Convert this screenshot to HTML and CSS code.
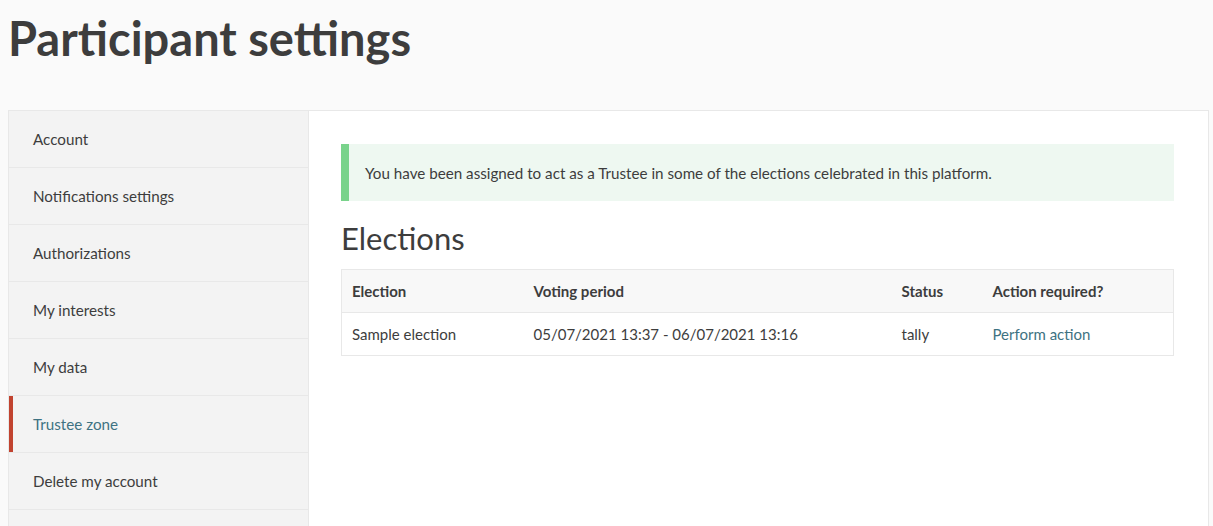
FILE: index.html
```html
<!DOCTYPE html>
<html lang="en">
<head>
<meta charset="utf-8">
<title>Participant settings</title>
<link rel="stylesheet" href="styles.css">
</head>
<body>
<header class="page-head">
  <h1 class="page-title">Participant settings</h1>
</header>
<div class="card">
  <nav class="side">
    <a class="side-item" href="#">Account</a>
    <a class="side-item" href="#">Notifications settings</a>
    <a class="side-item" href="#">Authorizations</a>
    <a class="side-item" href="#">My interests</a>
    <a class="side-item" href="#">My data</a>
    <a class="side-item is-active" href="#">Trustee zone</a>
    <a class="side-item" href="#">Delete my account</a>
  </nav>
  <main class="main">
    <div class="callout">You have been assigned to act as a Trustee in some of the elections celebrated in this platform.</div>
    <h3 class="section-title">Elections</h3>
    <table class="elections">
      <thead>
        <tr>
          <th class="c-election">Election</th>
          <th class="c-period">Voting period</th>
          <th class="c-status">Status</th>
          <th class="c-action">Action required?</th>
        </tr>
      </thead>
      <tbody>
        <tr>
          <td>Sample election</td>
          <td>05/07/2021 13:37 - 06/07/2021 13:16</td>
          <td>tally</td>
          <td><a class="link" href="#">Perform action</a></td>
        </tr>
      </tbody>
    </table>
  </main>
</div>
</body>
</html>
```
FILE: styles.css
```css
* { box-sizing: border-box; }
html, body { margin: 0; padding: 0; }
body {
  background: #fafafa;
  font-family: Lato, "Open Sans", sans-serif;
  color: #3d3d3d;
  height: 526px;
  overflow: hidden;
}
.page-head {
  padding: 8px 8px 0 8px;
  height: 110px;
}
.page-title {
  margin: 0;
  font-size: 47px;
  font-weight: 700;
  line-height: 60px;
  color: #3d3d3d;
}
.card {
  margin: 0 4px 0 8px;
  background: #fff;
  border: 1px solid #e8e8e8;
  border-bottom: 0;
  display: flex;
  height: 416px;
}
.side {
  width: 300px;
  flex: none;
  background: #f3f3f3;
  border-right: 1px solid #e8e8e8;
  display: flex;
  flex-direction: column;
}
.side-item {
  display: flex;
  align-items: center;
  height: 57px;
  flex: none;
  padding-left: 24px;
  border-bottom: 1px solid #e8e8e8;
  color: #3d3d3d;
  text-decoration: none;
  font-size: 15.2px;
}
.side-item.is-active {
  color: #3e7282;
  box-shadow: inset 4px 0 0 #c1432f;
}
.main {
  flex: 1;
  padding: 33px 34px 0 32px;
}
.callout {
  background: #eef8f1;
  border-left: 8px solid #79d38b;
  height: 57px;
  padding: 0 16px;
  display: flex;
  align-items: center;
  font-size: 15.2px;
}
.section-title {
  margin: 14px 0 8px 0;
  font-size: 31px;
  font-weight: 400;
  line-height: 46px;
}
.elections {
  width: 100%;
  border-collapse: collapse;
  border: 1px solid #e8e8e8;
  font-size: 15px;
  table-layout: fixed;
}
.elections th, .elections td {
  text-align: left;
  padding: 0 10px;
  height: 43px;
  vertical-align: middle;
}
.elections thead tr { background: #f8f8f8; border-bottom: 1px solid #e8e8e8; }
.elections th { font-weight: 700; }
.c-election { width: 182px; }
.c-period { width: 368px; }
.c-status { width: 91px; }
.link { color: #3e7282; text-decoration: none; }
```
